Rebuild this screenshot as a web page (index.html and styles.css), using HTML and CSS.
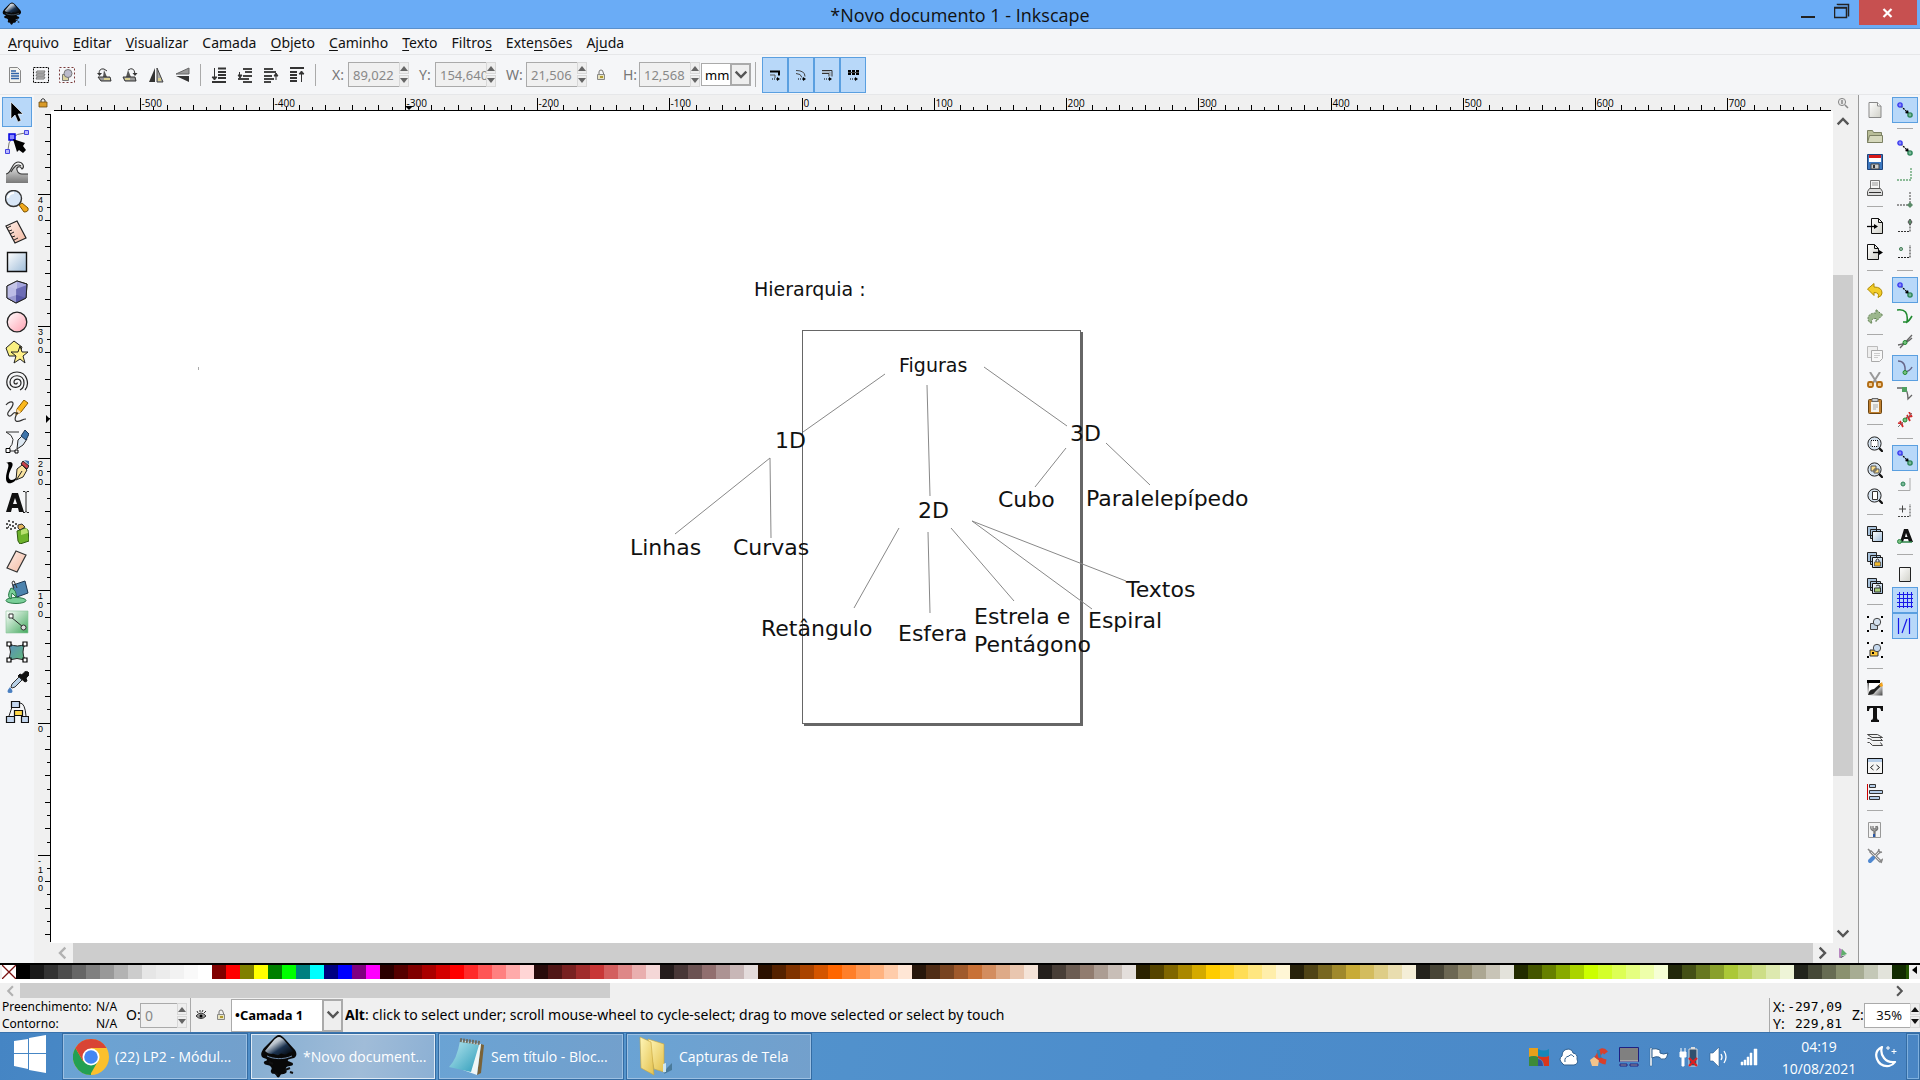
FILE: index.html
```html
<!DOCTYPE html>
<html lang="pt-BR">
<head>
<meta charset="utf-8">
<title>*Novo documento 1 - Inkscape</title>
<link rel="stylesheet" href="styles.css">
</head>
<body>
<svg class="defs" width="0" height="0" aria-hidden="true">
  <defs>
    <linearGradient id="gBlue" x1="0" y1="0" x2="1" y2="1"><stop offset="0" stop-color="#fff"/><stop offset="1" stop-color="#9dbbd8"/></linearGradient>
    <linearGradient id="gPink" x1="0" y1="0" x2="1" y2="1"><stop offset="0" stop-color="#fff"/><stop offset="1" stop-color="#ffa0b0"/></linearGradient>
    <linearGradient id="gPeach" x1="0" y1="0" x2="1" y2="1"><stop offset="0" stop-color="#fff0ea"/><stop offset="1" stop-color="#f2b8a0"/></linearGradient>
    <linearGradient id="gGreen" x1="0" y1="0" x2="1" y2="1"><stop offset="0" stop-color="#fff"/><stop offset="1" stop-color="#41a85c"/></linearGradient>
    <linearGradient id="gMesh" x1="0" y1="0" x2="1" y2="1"><stop offset="0" stop-color="#5a8fbd"/><stop offset="1" stop-color="#5fb878"/></linearGradient>
    <linearGradient id="gGrey" x1="0" y1="0" x2="0" y2="1"><stop offset="0" stop-color="#fff"/><stop offset="1" stop-color="#777"/></linearGradient>
    <linearGradient id="gPaper" x1="0" y1="0" x2="1" y2="1"><stop offset="0" stop-color="#fff"/><stop offset="1" stop-color="#d0d0c8"/></linearGradient>
    <linearGradient id="gInk" x1="0" y1="0" x2="1" y2="1"><stop offset="0" stop-color="#fff"/><stop offset=".35" stop-color="#b9c2cc"/><stop offset=".6" stop-color="#1c3350"/><stop offset="1" stop-color="#000"/></linearGradient>
    <linearGradient id="gPad" x1="0" y1="0" x2="1" y2="1"><stop offset="0" stop-color="#b8e8f0"/><stop offset="1" stop-color="#2f9cba"/></linearGradient>
    <linearGradient id="gFold" x1="0" y1="0" x2="1" y2="1"><stop offset="0" stop-color="#fff6b8"/><stop offset="1" stop-color="#e3c14e"/></linearGradient>
    <linearGradient id="gBrush" x1="0" y1="0" x2="1" y2="1"><stop offset="0" stop-color="#222"/><stop offset=".5" stop-color="#fff"/><stop offset="1" stop-color="#444"/></linearGradient>
    <symbol id="inkscape" viewBox="0 0 36 46">
      <path d="M18 1c2 0 4 2 6 4l10 11c2 3 2 6-1 8-3 1-7 1-6 3 1 1 5 1 5 3 0 3-6 1-7 4-1 2 2 3 0 5-3 2-5 0-6 3-1 2-3 2-4-1-1-2-4 0-5-3-1-2 2-3 0-5-2-3-6-1-7-4-1-2 3-2 3-3 0-2-3-1-5-3-2-3 0-6 2-9L12 5c2-2 4-4 6-4z" fill="#080808"/>
      <path d="M18 3c2 0 4 2 5 3l9 11c-1 3-3 0-6 3-3 2-5-2-7 0-3 3-5-1-8 0-3 0-5-1-7-3L13 6c1-1 3-3 5-3z" fill="url(#gInk)"/>
      <path d="M8 28l4 2M24 36l5-2M14 39l3 2M29 38l3 1" stroke="#111" stroke-width="2"/>
      <path d="M6 22c6 3 16 4 25 0" stroke="#6d89a8" stroke-width="1" fill="none"/>
    </symbol>
    <symbol id="nodes" viewBox="0 0 16 16">
      <path d="M4 4l7 7" stroke="#000" stroke-width="1.3" stroke-dasharray="2 1"/><path d="M12 12l-4-1 3-3z"/>
      <circle cx="3" cy="3" r="2.1" fill="#8a8af8" stroke="#3a3af0" stroke-width="1.4"/><circle cx="13" cy="13" r="2.1" fill="#7ab898" stroke="#2c8558" stroke-width="1.4"/>
    </symbol>
    <symbol id="lens" viewBox="0 0 16 16">
      <path d="M12 12l3 3" stroke="#111" stroke-width="2.4" stroke-linecap="round"/><circle cx="7.500" cy="7.500" r="6.600" fill="#d5e2ef" stroke="#222"/>
    </symbol>
    <symbol id="stack" viewBox="0 0 16 16"><path d="M.5.500h9v9h-9zM3.500 3.500h10v9h-10z" fill="#a9c3dc" stroke="#222"/><path d="M5.500 5.500h10v10h-10z" fill="url(#gBlue)" stroke="#111"/></symbol>
    <symbol id="handles" viewBox="0 0 16 16"><path d="M0 0h2v2H0zM14 0h2v2h-2zM0 14h2v2H0zM14 14h2v2h-2z"/></symbol>
    <symbol id="openlock" viewBox="0 0 12 12"><path d="M4 6V3q0-2 2-2t2 2l1 3" fill="none" stroke="#777"/><path d="M2.500 5.500h7v5h-7z" fill="#e8e4c0" stroke="#888"/><path d="M5 7h3v2H5z" fill="#b09a30"/></symbol>
    <symbol id="up" viewBox="0 0 10 12"><path d="M1 9h8L5 4z"/></symbol>
    <symbol id="down" viewBox="0 0 10 12"><path d="M1 3h8L5 8z"/></symbol>
    <symbol id="chev" viewBox="0 0 12 12"><path d="M2 3.500l4 4 4-4" fill="none" stroke="#555" stroke-width="1.800"/></symbol>
  </defs>
</svg>

<header class="titlebar">
  <svg class="app-icon" width="24" height="24"><use href="#inkscape"/></svg>
  <h1>*Novo documento 1 - Inkscape</h1>
  <div class="win-buttons">
    <button class="win" aria-label="Minimizar"><svg width="16" height="20"><path d="M1 16h14v2H1z" fill="#222"/></svg></button>
    <button class="win" aria-label="Restaurar"><svg width="16" height="20"><path d="M3.500 5V4.500h11v12" fill="none" stroke="#222" stroke-width="1.500"/><path d="M.5 7.500h12v10H.5zM0 8h13" fill="none" stroke="#222" stroke-width="1.500"/></svg></button>
    <button class="win close" aria-label="Fechar"><svg width="12" height="12"><path d="M1.500 2l8 8m0-8l-8 8" stroke="#fff" stroke-width="2.200"/></svg></button>
  </div>
</header>

<nav class="menubar">
  <a href="#"><u>A</u>rquivo</a><a href="#"><u>E</u>ditar</a><a href="#"><u>V</u>isualizar</a><a href="#">Ca<u>m</u>ada</a><a href="#"><u>O</u>bjeto</a><a href="#"><u>C</u>aminho</a><a href="#"><u>T</u>exto</a><a href="#">Filtro<u>s</u></a><a href="#">Exte<u>n</u>sões</a><a href="#">Aj<u>u</u>da</a>
</nav>

<div class="toolbar">
  <div class="group">
    <button aria-label="Selecionar tudo"><svg viewBox="0 0 16 16"><path d="M2.500.500h8l3 3v12h-11z" fill="#f4f4f0" stroke="#888"/><path d="M4 4h5M4 6.500h8M4 9h8M4 11.500h8" stroke="#2f64a8" stroke-width="1.500"/></svg></button>
    <button aria-label="Selecionar em todas as camadas"><svg viewBox="0 0 16 16"><path d="M.5.500h15v15H.5z" fill="none" stroke="#000" stroke-dasharray="2 1"/><path d="M4 4h8l-1 2h-8zM4 7h8l-1 2h-8zM4 10h8l-1 2h-8z" fill="#ccc" stroke="#777"/></svg></button>
    <button aria-label="Desfazer seleção"><svg viewBox="0 0 16 16"><path d="M.5.500h15v15H.5z" fill="none" stroke="#7a3a3a" stroke-dasharray="2 2"/><path d="M3.500 7.500h6v6h-6z" fill="#ddd5a0" stroke="#777"/><circle cx="9" cy="6.500" r="4" fill="#bbc" stroke="#777"/></svg></button>
  </div>
  <div class="group">
    <button aria-label="Girar 90° anti-horário"><svg viewBox="0 0 16 16"><path d="M3 7q0-6 5-5l3 2" fill="none" stroke="#333"/><path d="M1 6h5L3.500 9z" fill="#333"/><path d="M8 3l3 7H7z" fill="#555"/><path d="M2 10h12l1 4H5z" fill="#999" stroke="#333"/><path d="M8 11h6v2H8z" fill="#d8cf90"/></svg></button>
    <button aria-label="Girar 90° horário"><svg viewBox="0 0 16 16"><path d="M6 3q6-4 7 4" fill="none" stroke="#333"/><path d="M10.500 6h5L13 9z" fill="#333"/><path d="M6 3l3 7H4z" fill="#555"/><path d="M1 10h12l1 4H3z" fill="#999" stroke="#333"/><path d="M3 11h5v2H3z" fill="#d8cf90"/></svg></button>
    <button aria-label="Espelhar horizontalmente"><svg viewBox="0 0 16 16"><path d="M7 1v14H1z" fill="#333"/><path d="M9 1v14h6z" fill="#aaa" stroke="#444"/><path d="M10 11h3v3h-3z" fill="#d8cf90"/></svg></button>
    <button aria-label="Espelhar verticalmente"><svg viewBox="0 0 16 16"><path d="M2 7h13V1z" fill="#999" stroke="#666"/><path d="M2 9h13v6z" fill="#333"/></svg></button>
  </div>
  <div class="group">
    <button aria-label="Baixar para o fundo"><svg viewBox="0 0 16 16"><path d="M3.500 1v11M1 10h5l-2.500 3z" fill="#333" stroke="#333"/><path d="M7 1.500h8M7 5h8M7 8h8M7 11h8M1 15h14" stroke="#333" stroke-width="1.800"/></svg></button>
    <button aria-label="Abaixar"><svg viewBox="0 0 16 16"><path d="M2.500 5v4M1 8h4l-2 3z" fill="#333" stroke="#333"/><path d="M6 2h9M8 5h7M1 12h11M6 9h9M6 15h9" stroke="#444" stroke-width="1.800"/></svg></button>
    <button aria-label="Levantar"><svg viewBox="0 0 16 16"><path d="M13 13V8M11 9h4l-2-3z" fill="#333" stroke="#333"/><path d="M1 2h9M1 5h12M1 9h8M1 12h10M1 15h7" stroke="#444" stroke-width="1.800"/></svg></button>
    <button aria-label="Levantar ao topo"><svg viewBox="0 0 16 16"><path d="M12.500 15V5M10 7h5l-2.500-3z" fill="#333" stroke="#333"/><path d="M1 1h14M1 5h7M1 8h7M1 11h7M1 14h7" stroke="#333" stroke-width="1.800"/></svg></button>
  </div>
  <div class="fields">
    <label for="fx">X:</label><span class="spin"><input id="fx" type="text" value="89,022" disabled><span class="steps"><button aria-label="X mais" disabled><svg><use href="#up"/></svg></button><button aria-label="X menos" disabled><svg><use href="#down"/></svg></button></span></span>
    <label for="fy">Y:</label><span class="spin"><input id="fy" type="text" value="154,640" disabled><span class="steps"><button aria-label="Y mais" disabled><svg><use href="#up"/></svg></button><button aria-label="Y menos" disabled><svg><use href="#down"/></svg></button></span></span>
    <label for="fw">W:</label><span class="spin"><input id="fw" type="text" value="21,506" disabled><span class="steps"><button aria-label="W mais" disabled><svg><use href="#up"/></svg></button><button aria-label="W menos" disabled><svg><use href="#down"/></svg></button></span></span>
    <button class="lock" aria-label="Travar proporção"><svg width="12" height="12"><use href="#openlock"/></svg></button>
    <label for="fh">H:</label><span class="spin"><input id="fh" type="text" value="12,568" disabled><span class="steps"><button aria-label="H mais" disabled><svg><use href="#up"/></svg></button><button aria-label="H menos" disabled><svg><use href="#down"/></svg></button></span></span>
    <span class="combo unit"><select aria-label="Unidade"><option>mm</option></select><span class="arrow"><svg width="16" height="16"><use href="#chev"/></svg></span></span>
  </div>
  <div class="toggles">
    <button aria-pressed="true" aria-label="Escalar traço"><svg viewBox="0 0 12 12"><path d="M1 2.500h9v4" fill="none" stroke="#000" stroke-width="2"/><path d="M1 6h5v3" fill="none" stroke="#555"/><path d="M3 10h6" stroke="#000" stroke-dasharray="1 1"/><path d="M8 8l3 2-3 2z"/></svg></button>
    <button aria-pressed="true" aria-label="Escalar cantos"><svg viewBox="0 0 12 12"><path d="M1 1.500q9 0 9 6M1 4.500q5 0 6 4" fill="none" stroke="#444"/><path d="M3 10h6" stroke="#000" stroke-dasharray="1 1"/><path d="M8 8l3 2-3 2z"/></svg></button>
    <button aria-pressed="true" aria-label="Mover gradientes"><svg viewBox="0 0 12 12"><path d="M1 1.500h10v6M1 4.500h7v3" fill="none" stroke="#333"/><path d="M1 3h8v4" fill="none" stroke="#999"/><path d="M3 10h6" stroke="#000" stroke-dasharray="1 1"/><path d="M8 8l3 2-3 2z"/></svg></button>
    <button aria-pressed="true" aria-label="Mover padrões"><svg viewBox="0 0 12 12"><path d="M1 2h11M1 5h11" stroke="#000" stroke-width="2" stroke-dasharray="3 1"/><path d="M1 3.500h11" stroke="#444"/><path d="M3 10h6" stroke="#000" stroke-dasharray="1 1"/><path d="M8 8l3 2-3 2z"/></svg></button>
  </div>
</div>

<main class="workspace">
  <div class="toolbox">
    <button aria-pressed="true" aria-label="Selecionar"><svg viewBox="0 0 24 24"><path d="M6 2v17l4-4 3 7 3-1.500-3-6.500h5z" fill="#000" stroke="#fff" stroke-width=".6"/></svg></button>
    <button aria-label="Nós"><svg viewBox="0 0 24 24"><path d="M3 20Q3 4 20 3" fill="none" stroke="#777"/><path d="M.5 19.500h4v4h-4zM19.500.500h4v4h-4z" fill="#b8b8ff" stroke="#4444e0"/><path d="M4 4h6v6H4z" fill="#8a8aff" stroke="#0000e0" stroke-width="1.500"/><path d="M8 9l12 4-2 3 3 4-3 3-4-3-2 2z" fill="#000"/></svg></button>
    <button aria-label="Ajustar"><svg viewBox="0 0 24 24"><path d="M1 14c6 0 5-12 12-12 5 0 7 5 4 7-2-4-6-2-5 1 1 5 6 4 11 4v9H1z" fill="url(#gGrey)"/><path d="M1 14c6 0 5-12 12-12 5 0 7 5 4 7-2-4-6-2-5 1 1 5 6 4 11 4M6 12c3-5 6-9 10-6" fill="none" stroke="#333" stroke-width="1.100"/></svg></button>
    <button aria-label="Zoom"><svg viewBox="0 0 24 24"><path d="M14 15l3-2 6 5q1 4-4 4z" fill="#f0a81c" stroke="#7a5200"/><circle cx="8.500" cy="8.500" r="8" fill="#d8e6f6" stroke="#333" stroke-width="1.400"/><path d="M3 8q1-5 6-5" stroke="#fff" stroke-width="2" fill="none"/></svg></button>
    <button aria-label="Medir"><svg viewBox="0 0 24 24"><path d="M1 6l11-5 9 17-11 5z" fill="url(#gPeach)" stroke="#222" stroke-width="1.200"/><path d="M2 8l4-2M4 11l3-1M5 14l4-2M7 17l3-1M9 20l4-2" stroke="#222"/></svg></button>
    <button aria-label="Retângulo"><svg viewBox="0 0 24 24"><path d="M2.500 2.500h19v19h-19z" fill="url(#gBlue)" stroke="#111" stroke-width="1.400"/></svg></button>
    <button aria-label="Caixa 3D"><svg viewBox="0 0 24 24"><path d="M2 6l10-5 10 3-1 14-10 5-9-5z" fill="#8e8ed0" stroke="#222"/><path d="M2 6l10-5v14L2 18z" fill="#c5c5e8"/><path d="M12 1l9.500 3.500L21 18l-9-3z" fill="#a5a5dc"/><path d="M2 18l10-3 9 3-10 4.500z" fill="#52529f"/><path d="M2 6l9 3v14l-9-5z" fill="#b9b9e6" fill-opacity=".7"/><path d="M11 9l11-4-1 13-10 5z" fill="#5a5aa8" fill-opacity=".75"/><path d="M2 6l10-5 10 3-1 14-10 5-9-5z" fill="none" stroke="#222"/></svg></button>
    <button aria-label="Elipse"><svg viewBox="0 0 24 24"><circle cx="12" cy="12" r="9.800" fill="url(#gPink)" stroke="#222" stroke-width="1.300"/></svg></button>
    <button aria-label="Estrela"><svg viewBox="0 0 24 24"><path d="M9 1l8 6-3 9H4L1 8z" fill="#f8ef80" stroke="#222"/><path d="M15 6l2 6 6 0-5 4 2 7-5-4-6 4 2-7-5-4h7z" fill="#fff08a" stroke="#222"/></svg></button>
    <button aria-label="Espiral"><svg viewBox="0 0 24 24"><path d="M12 12.500C13 14 9 15 9 12c0-4 7-4 7 1 0 6-11 6-11-1C5 4 19 3 19 13c0 4-2 6-4 7M6 20C-1 15 1 2 12 2c10 0 13 12 8 18" fill="none" stroke="#222" stroke-width="1.200"/></svg></button>
    <button aria-label="Lápis"><svg viewBox="0 0 24 24"><path d="M1 5c2-3 6-4 7-2 1 5-9 10-4 13 3 1 4-5 7-3 2 1-3 6 0 8 3 2 6-2 10-2" fill="none" stroke="#333" stroke-width="1.200"/><path d="M11 15l1-6 7-9 4 3-7 9z" fill="#fbb81c" stroke="#8a5a00"/><path d="M11 15l1-6 4 3z" fill="#f8dcb0"/><path d="M11 15l.5-3 2 1z"/></svg></button>
    <button aria-label="Caneta"><svg viewBox="0 0 24 24"><path d="M3 20Q14 8 1 2h13M3 21h9" fill="none" stroke="#333"/><path d="M12 19l1-9 5-5 4 4-4 6z" fill="#dde8f2" stroke="#222"/><path d="M16 6l4-6 4 4-3 6z" fill="#3d74ab" stroke="#1c3550"/><path d="M1 18.500h4v4H1zM10 20h3v3h-3z" fill="#fff" stroke="#000"/></svg></button>
    <button aria-label="Caligrafia"><svg viewBox="0 0 24 24"><path d="M1 3C8 0 9 4 6 9c-3 6-3 10 0 11 3 0 5-2 7-4-2 6-7 8-10 7-4-3-1-11 0-15C4 4 3 3 1 3z"/><path d="M11 20l1-11 5-4 5 5-4 7z" fill="#f8e2a0" stroke="#222"/><path d="M16 4l2-3 6 5-2 3z" fill="#c7404a" stroke="#222"/><path d="M19 0l5 1v4z" fill="#3d74ab"/><path d="M12 19l5-8" stroke="#222"/></svg></button>
    <button aria-label="Texto"><svg viewBox="0 0 24 24"><path d="M7 3h6l6 19h-5l-1-4H7l-1 4H1zM8 14h4l-2-6z" fill="#111" fill-rule="evenodd"/><path d="M18 1.500h2l1 1 1-1h2M21 2v20M18 22.500h2l1-1 1 1h2" fill="none" stroke="#222"/></svg></button>
    <button aria-label="Spray"><svg viewBox="0 0 24 24"><path d="M12 11l8-3 3 2 1 11-9 3-2-3z" fill="#6db32c" stroke="#2f5c10"/><path d="M16 10l6-2 1 5-7 2z" fill="#b8e070"/><path d="M13 5l4-1 3 3-5 3-2-2z" fill="#e2b35c" stroke="#333"/><path d="M10 4h2M7 2h2M3 1h2M7 6h2M4 5h2M1 4h2M9 8h2M5 9h2M1 8h2M3 7h1" stroke="#222" stroke-width="1.600"/></svg></button>
    <button aria-label="Borracha"><svg viewBox="0 0 24 24"><path d="M11 1l10 4-9 17-10-4z" fill="url(#gPeach)" stroke="#333" stroke-width="1.200"/></svg></button>
    <button aria-label="Balde de tinta"><svg viewBox="0 0 24 24"><ellipse cx="11" cy="20.500" rx="10" ry="3" fill="#79cf98" stroke="#2b7a48"/><path d="M8 5l12-4 3 12-11 4q-5-5-4-12z" fill="#4c83ae" stroke="#1c3550"/><path d="M6 8q-5 9 0 11l1-6 4 4q1-7-5-9z" fill="#79cf98" stroke="#2b7a48"/><path d="M9 8L7 3q0-2 2-2l3 7" fill="none" stroke="#333"/></svg></button>
    <button aria-label="Gradiente"><svg viewBox="0 0 24 24"><path d="M1 1h22v22H1z" fill="url(#gGreen)" stroke="#8cc79a" stroke-width=".6"/><path d="M6 7l12 10" stroke="#222"/><path d="M4 4h4v4H4z" fill="#fff" stroke="#333"/><circle cx="18.500" cy="17.500" r="2.500" fill="#ddd" stroke="#333"/></svg></button>
    <button aria-label="Malha"><svg viewBox="0 0 24 24"><path d="M4 4q9 4 16 0-4 8 0 16-8-3-16 0 3-8 0-16z" fill="url(#gMesh)" stroke="#222"/><path d="M2 2h4v4H2zM18 2h4v4h-4zM2 18h4v4H2zM18 18h4v4h-4z" fill="#fff" stroke="#000" stroke-width="1.200"/></svg></button>
    <button aria-label="Conta-gotas"><svg viewBox="0 0 24 24"><path d="M13 6l2-2 2 1q3-5 6-3t-2 6l1 3-2 1z" fill="#111" stroke="#111"/><path d="M6 17l1-3 7-7 3 3-7 7-3 1z" fill="#b8d0e6" stroke="#333"/><path d="M5 17q-5 6 0 6t0-6z" fill="#4a7fc0"/></svg></button>
    <button aria-label="Conector"><svg viewBox="0 0 24 24"><path d="M7 7L4 16M15 3q5 0 6 13" fill="none" stroke="#222"/><path d="M6.500 1.500h8v6h-8zM1.500 16.500h8v6h-8zM16.500 16.500h7v6h-7z" fill="#c3d6ee" stroke="#111" stroke-width="1.200"/><path d="M9.500 10.500h8v5h-8z" fill="#ffd84a" stroke="#111" stroke-width="1.200"/></svg></button>
  </div>

  <section class="editor">
    <div class="corner"><svg width="10" height="12"><path d="M3 5V3q2-3 4 0v2" fill="none" stroke="#333"/><path d="M1 5h8v5H1z" fill="#d99a28" stroke="#6b4a10" stroke-width=".8"/></svg></div>
    <svg class="ruler" id="rulerX" aria-hidden="true"></svg>
    <div class="corner"><svg width="12" height="12"><circle cx="5" cy="5" r="3.600" fill="#e8e8e8" stroke="#888"/><path d="M8 8l3 3M5 3v4" stroke="#888" stroke-width="1.500"/></svg></div>
    <svg class="ruler vertical" id="rulerY" aria-hidden="true"></svg>
    <svg class="canvas" role="img" aria-label="Hierarquia de figuras">
      <g transform="translate(-51 -111)">
        <path d="M804 724h277V332h2v394H804z" fill="#666"/>
        <rect x="802.500" y="330.500" width="278" height="393" fill="#fff" stroke="#666"/>
        <path d="M198.500 367v3" stroke="#aaa"/>
        <g class="links">
          <path d="M885 374L803 432M927 385l3 111M984 367l83 59M770 458l-95 76M770 458l1 80M1066 448l-31 39M1106 443l44 42M899 528l-45 80M928 532l2 81M951 528l63 73M972 521l120 88M972 521l154 60"/>
        </g>
        <g class="small">
          <text x="754" y="296">Hierarquia :</text>
          <text x="899" y="372">Figuras</text>
        </g>
        <g class="big">
          <text x="775" y="448">1D</text><text x="918" y="518">2D</text><text x="1070" y="441">3D</text>
          <text x="630" y="555">Linhas</text><text x="733" y="555">Curvas</text>
          <text x="998" y="507">Cubo</text><text x="1086" y="506">Paralelepípedo</text>
          <text x="761" y="636">Retângulo</text><text x="898" y="641">Esfera</text>
          <text x="974" y="624">Estrela e</text><text x="974" y="652">Pentágono</text>
          <text x="1126" y="597">Textos</text><text x="1088" y="628">Espiral</text>
        </g>
      </g>
    </svg>
    <div class="scroll-y"><button aria-label="Rolar para cima"><svg class="flip" width="16" height="16"><use href="#chev"/></svg></button><div class="track"><div class="thumb"></div></div><button aria-label="Rolar para baixo"><svg width="16" height="16"><use href="#chev"/></svg></button></div>
    <div class="scroll-x"><button class="dim" aria-label="Rolar para a esquerda"><svg class="left" width="16" height="16"><use href="#chev"/></svg></button><div class="thumb"></div><button aria-label="Rolar para a direita"><svg class="right" width="16" height="16"><use href="#chev"/></svg></button></div>
    <div class="corner"><svg width="12" height="12"><path d="M2 1l4 2-2 7-2 1z" fill="#b888c0"/><path d="M5 2l5 5-6 2z" fill="#5fae6c"/><path d="M3 10l6-2-5 3z" fill="#445"/></svg></div>
  </section>

  <aside class="panels">
    <div class="commands">
      <button aria-label="Novo"><svg viewBox="0 0 16 16"><path d="M2 .500h8.500l3.500 3.500v11.500H2z" fill="url(#gPaper)" stroke="#888"/><path d="M10.500.500v3.500H14" fill="#fff" stroke="#888"/></svg></button>
      <button aria-label="Abrir"><svg viewBox="0 0 16 16"><path d="M.5 14.500v-12h5l1 2h8v10z" fill="#b8bd98" stroke="#7b8063"/><path d="M.5 14.500l2-7h13v7z" fill="#d5d8bc" stroke="#7b8063"/></svg></button>
      <button aria-label="Salvar"><svg viewBox="0 0 16 16"><path d="M.5.500h15v15H.5z" fill="#3c78c0" stroke="#1d437a"/><path d="M2 1h12v7H2z" fill="#fff"/><path d="M2 1h12v3H2z" fill="#d81a1a"/><path d="M4 10h8v5H4z" fill="#ccc" stroke="#444"/><path d="M6 11h2v3H6z" fill="#333"/></svg></button>
      <button aria-label="Imprimir"><svg viewBox="0 0 16 16"><path d="M3.500 9V.500h9V9" fill="#f4f4f4" stroke="#777"/><path d="M5 3h6M5 5h6" stroke="#999"/><path d="M2.500 8.500h11l2 3v4H.5v-4z" fill="#ddd" stroke="#555"/><path d="M2 12.500h12" stroke="#333"/></svg></button>
      <hr>
      <button aria-label="Importar"><svg viewBox="0 0 16 16"><path d="M4.500.500h7l4 4v11h-11z" fill="url(#gPaper)" stroke="#111"/><path d="M11.500.500v4h4" fill="none" stroke="#111"/><path d="M0 8.500h8" stroke="#000" stroke-width="1.300"/><path d="M7 6l4 2.500L7 11z"/></svg></button>
      <button aria-label="Exportar"><svg viewBox="0 0 16 16"><path d="M.5.500h7l4 4v11H.5z" fill="url(#gPaper)" stroke="#111"/><path d="M7.500.500v4h4" fill="none" stroke="#111"/><path d="M6 8.500h7" stroke="#000" stroke-width="1.300"/><path d="M12 6l4 2.500-4 2.500z"/></svg></button>
      <hr>
      <button aria-label="Desfazer"><svg viewBox="0 0 16 16"><path d="M.5 7L7 1.500V5q8 0 8 6 0 3-4 4.500 2-5-4-5v3z" fill="#f2cd2a" stroke="#b08a00"/></svg></button>
      <button aria-label="Refazer"><svg viewBox="0 0 16 16"><path d="M15.500 7L9 1.500V5q-8 0-8 6 0 3 4 4.500-2-5 4-5v3z" fill="#9bb78c" stroke="#5f7f50" stroke-dasharray="2 1"/></svg></button>
      <hr>
      <button aria-label="Copiar"><svg viewBox="0 0 16 16"><path d="M.5.500h10v11H.5z" fill="#eee" stroke="#bbb"/><path d="M4.500 4.500h11v8l-3 3h-8z" fill="#f8f8f8" stroke="#aaa"/><path d="M7 7.500h6M7 9.500h6M7 11.500h4" stroke="#ccc"/></svg></button>
      <button aria-label="Recortar"><svg viewBox="0 0 16 16"><path d="M3 0l7 11M13 0L6 11" stroke="#999" stroke-width="2"/><rect x="1" y="10" width="5" height="5" rx="1.500" fill="#f0c890" stroke="#b06a10" stroke-width="1.800"/><rect x="10" y="10" width="5" height="5" rx="1.500" fill="#f0c890" stroke="#b06a10" stroke-width="1.800"/></svg></button>
      <button aria-label="Colar"><svg viewBox="0 0 16 16"><rect x="1.500" y="1.500" width="13" height="14" rx="1" fill="#c08030" stroke="#6b4410"/><path d="M4 4h8v10H4z" fill="#f4f4f0"/><path d="M5 .500h6v3H5z" fill="#ccc" stroke="#666"/><path d="M6 7h5M6 9h5M6 11h3" stroke="#aaa"/></svg></button>
      <hr>
      <button aria-label="Zoom na seleção"><svg viewBox="0 0 16 16"><use href="#lens"/><path d="M4 4.500h7v6H4z" fill="#fff" stroke="#000" stroke-dasharray="1 1"/></svg></button>
      <button aria-label="Zoom no desenho"><svg viewBox="0 0 16 16"><use href="#lens"/><path d="M4 4h5v5H4zM7 7h5v4H7z" fill="#ffe08a" stroke="#555"/></svg></button>
      <button aria-label="Zoom na página"><svg viewBox="0 0 16 16"><use href="#lens"/><path d="M5.500 3.500h5v8h-5z" fill="#fff" stroke="#333"/></svg></button>
      <hr>
      <button aria-label="Duplicar"><svg viewBox="0 0 16 16"><use href="#stack"/></svg></button>
      <button aria-label="Clonar"><svg viewBox="0 0 16 16"><use href="#stack"/><path d="M9 10V8q1.500-2 3 0v2" fill="none" stroke="#333"/><path d="M7.500 10h6v4h-6z" fill="#f2b92c" stroke="#444" stroke-width=".7"/></svg></button>
      <button aria-label="Desligar clone"><svg viewBox="0 0 16 16"><use href="#stack"/><path d="M9 8q2-2 4 0v2" fill="none" stroke="#333"/><path d="M7.500 10h6v4h-6z" fill="#a9d07a" stroke="#222" stroke-width=".9"/></svg></button>
      <hr>
      <button aria-label="Agrupar"><svg viewBox="0 0 16 16"><use href="#handles"/><path d="M3.500 7.500h7v6h-7z" fill="#c3d3e2" stroke="#444"/><circle cx="10" cy="6" r="3.700" fill="#d5e2ef" stroke="#444"/></svg></button>
      <button aria-label="Desagrupar"><svg viewBox="0 0 16 16"><use href="#handles"/><path d="M3 8h8v6H3z" fill="#ffc93a" stroke="#333"/><circle cx="10" cy="6" r="3.700" fill="#c5d8ee" stroke="#444"/><path d="M5 10h2v2H5z"/></svg></button>
      <hr>
      <button aria-label="Preenchimento e contorno"><svg viewBox="0 0 16 16"><path d="M.5.500h15v15H.5z" fill="url(#gBrush)"/><path d="M2 3h11L2 13z" fill="#fff"/><path d="M0 1.500h13" stroke="#000" stroke-width="3"/><path d="M1 15q1-6 6-6l7-6v3l-6 6q-1 3-7 3z" fill="#222"/><path d="M12 5l3-3 1 4-2 1z" fill="#f5a51c"/></svg></button>
      <button aria-label="Texto e fonte"><svg viewBox="0 0 16 16"><path d="M0 0h16v5h-2q0-3-2-3h-2v10q0 2 2 2v2H4v-2q2 0 2-2V2H4Q2 2 2 5H0z" fill="#111"/></svg></button>
      <button aria-label="Camadas"><svg viewBox="0 0 16 16"><path d="M.5 2.500h10l5 3H5zM.5 6.500h2l3 2h10l-2-2M.5 10.500h2l3 3h10l-2-3" fill="#eee" stroke="#444"/></svg></button>
      <button aria-label="Editor XML"><svg viewBox="0 0 16 16"><path d="M.5.500h15v15H.5z" fill="#f4f4f4" stroke="#111"/><path d="M1 1h14v3H1z" fill="#b5cde8"/><path d="M6.500 7l-3 2.500 3 2.500M9.500 7l3 2.500-3 2.500" fill="none" stroke="#222"/></svg></button>
      <button aria-label="Alinhar e distribuir"><svg viewBox="0 0 16 16"><path d="M.5 0v16" stroke="#c00"/><path d="M2.500.500h6v3h-6zM2.500 6.500h13v3h-13zM2.500 12.500h10v3h-10z" fill="#b5cde8" stroke="#333"/></svg></button>
      <hr>
      <button aria-label="Preferências do documento"><svg viewBox="0 0 16 16"><path d="M1.500.500h12v15h-12z" fill="#f4f4f4" stroke="#999"/><path d="M4 4q-1 4 3 5v6M10 4q2 4-2 5v6M6 4v3h3V4" fill="none" stroke="#777" stroke-width="1.300"/><path d="M6 12h2v3H6z" fill="#2c5aa8"/></svg></button>
      <button aria-label="Preferências"><svg viewBox="0 0 16 16"><path d="M3 3l10 10M13 3L3 13" stroke="#888" stroke-width="3"/><path d="M3 3l10 10" stroke="#ddd"/><path d="M1 1l3 3M12 1l-1 4 4-1M14 15l1-3-3 2" fill="none" stroke="#888" stroke-width="1.600"/><path d="M3 13l3-3" stroke="#4f88d0" stroke-width="4" stroke-linecap="round"/><path d="M12 4l-4 4" stroke="#ddd"/></svg></button>
    </div>
    <div class="snaps">
      <button aria-pressed="true" aria-label="Ativar encaixe"><svg><use href="#nodes"/></svg></button>
      <hr>
      <button aria-label="Encaixar caixas"><svg><use href="#nodes"/></svg></button>
      <button aria-label="Encaixar bordas"><svg viewBox="0 0 16 16"><path d="M0 14h14V1" fill="none" stroke="#6aa878" stroke-width="1.400" stroke-dasharray="2 1"/></svg></button>
      <button aria-label="Encaixar cantos"><svg viewBox="0 0 16 16"><path d="M0 13h13V0" fill="none" stroke="#777" stroke-width="1.400" stroke-dasharray="2 1"/><path d="M13 10l3 3-3 3-3-3z" fill="#5a8a68"/></svg></button>
      <button aria-label="Encaixar meios de borda"><svg viewBox="0 0 16 16"><path d="M1 13.500h12V5" fill="none" stroke="#333" stroke-dasharray="2 1"/><path d="M13 1l2 3-2 3-2-3z" fill="#5a8a68" stroke="#555"/></svg></button>
      <button aria-label="Encaixar centros"><svg viewBox="0 0 16 16"><path d="M1 13.500h12V1" fill="none" stroke="#222" stroke-dasharray="2 1"/><circle cx="4" cy="5" r="1.600" fill="#9ab8a4" stroke="#4c8560"/></svg></button>
      <hr>
      <button aria-pressed="true" aria-label="Encaixar nós"><svg><use href="#nodes"/></svg></button>
      <button aria-label="Encaixar caminhos"><svg viewBox="0 0 16 16"><path d="M0 2q12-2 10 12 2-1 5-6M10 14l-4 0" fill="none" stroke="#208a30" stroke-width="1.600"/></svg></button>
      <button aria-label="Encaixar interseções"><svg viewBox="0 0 16 16"><path d="M1 11q8-1 14-7M3 14L15 1" fill="none" stroke="#666" stroke-width="1.300"/><circle cx="8" cy="8.500" r="2" fill="#7ac080" stroke="#208a30"/></svg></button>
      <button aria-pressed="true" aria-label="Encaixar nós cúspides"><svg viewBox="0 0 16 16"><path d="M1 1q8 0 7 11 5-1 7-5" fill="none" stroke="#668" stroke-width="1.500"/><circle cx="8" cy="12.500" r="2" fill="#7ac080" stroke="#208a30"/></svg></button>
      <button aria-label="Encaixar nós suaves"><svg viewBox="0 0 16 16"><path d="M0 2h5q4 1 5 4t1 7l4-4" fill="none" stroke="#666" stroke-width="1.300"/><path d="M5 1h5v5H5z" fill="#50a060"/></svg></button>
      <button aria-label="Encaixar meios de linha"><svg viewBox="0 0 16 16"><path d="M3 9l3 6M1 11l5 1M10 3l3 6M9 6l6-2M12 0l3 5" stroke="#d02828" stroke-width="1.700"/><path d="M1 15L15 1" stroke="#777"/><circle cx="8" cy="8" r="2" fill="#7ac080" stroke="#208a30"/></svg></button>
      <hr>
      <button aria-pressed="true" aria-label="Encaixar outros pontos"><svg><use href="#nodes"/></svg></button>
      <button aria-label="Centro de objetos"><svg viewBox="0 0 16 16"><path d="M1 14.500h12V2" fill="none" stroke="#aaa"/><circle cx="6" cy="8" r="2" fill="#7ab898" stroke="#2c8558"/></svg></button>
      <button aria-label="Centro de rotação"><svg viewBox="0 0 16 16"><path d="M1 14.500h12V2" fill="none" stroke="#444" stroke-dasharray="2 1"/><path d="M2 7h7M5.500 3.500v7" stroke="#444"/></svg></button>
      <button aria-label="Linha de base de texto"><svg viewBox="0 0 16 16"><path d="M7 1h4l5 13h-4l-1-3H7l-1 3H3zM8 9h2.500L9 5z" fill="#111" fill-rule="evenodd"/><path d="M1 14h14" stroke="#2c8548" stroke-width="1.500"/><circle cx="2.500" cy="13.500" r="2" fill="#7ac080" stroke="#2c8548"/></svg></button>
      <hr>
      <button aria-label="Borda da página"><svg viewBox="0 0 16 16"><path d="M2.500 1.500h11v14h-11z" fill="url(#gPaper)" stroke="#222"/></svg></button>
      <button aria-pressed="true" aria-label="Grades"><svg viewBox="0 0 16 16"><path d="M2.500 0v16M6.500 0v16M10.500 0v16M14.500 0v16M0 2.500h16M0 6.500h16M0 10.500h16M0 14.500h16" stroke="#1818e8"/></svg></button>
      <button aria-pressed="true" aria-label="Guias"><svg viewBox="0 0 16 16"><path d="M1.500 0v16M12.500 0v16M10 1L5 15" stroke="#1818e8" stroke-width="1.200"/></svg></button>
    </div>
  </aside>
</main>

<div class="palette"><div class="swatches" id="swatches"><button class="none" aria-label="Nenhuma cor"><svg width="14" height="14"><path d="M0 0l14 14M14 0L0 14" stroke="#7a1010" stroke-width="1.300"/></svg></button></div><button class="menu" aria-label="Menu da paleta"><svg width="8" height="10"><path d="M6 1v8L1 5z"/></svg></button></div>
<div class="palette-scroll"><button class="dim" aria-label="Paleta anterior"><svg class="left" width="14" height="14"><use href="#chev"/></svg></button><div class="track"><div class="thumb"></div></div><button aria-label="Próxima paleta"><svg class="right" width="14" height="14"><use href="#chev"/></svg></button></div>

<footer class="status">
  <dl class="paint"><dt>Preenchimento:</dt><dd>N/A</dd><dt>Contorno:</dt><dd>N/A</dd></dl>
  <label for="op">O:</label>
  <span class="spin opacity"><input id="op" type="text" value="0" disabled><span class="steps"><button aria-label="Opacidade mais" disabled><svg><use href="#up"/></svg></button><button aria-label="Opacidade menos" disabled><svg><use href="#down"/></svg></button></span></span>
  <div class="layer">
    <button aria-label="Visibilidade"><svg width="12" height="12"><path d="M1 7q5-6 10 0-5 5-10 0M3 4L2 2M5 3V1M7 3l1-2M9 4l2-2" fill="#999" stroke="#333"/><circle cx="6" cy="7" r="1.500"/></svg></button>
    <button aria-label="Travar camada"><svg width="12" height="12"><use href="#openlock"/></svg></button>
    <span class="combo"><select aria-label="Camada atual"><option>•Camada 1</option></select><span class="arrow"><svg width="16" height="16"><use href="#chev"/></svg></span></span>
  </div>
  <p class="hint"><b>Alt</b>: click to select under; scroll mouse-wheel to cycle-select; drag to move selected or select by touch</p>
  <dl class="coords"><dt>X:</dt><dd>-297,09</dd><dt>Y:</dt><dd>229,81</dd></dl>
  <label for="zm">Z:</label>
  <span class="spin zoom"><input id="zm" type="text" value="35%"><span class="steps"><button aria-label="Aumentar zoom"><svg><use href="#up"/></svg></button><button aria-label="Diminuir zoom"><svg><use href="#down"/></svg></button></span></span>
</footer>

<div class="taskbar">
  <button class="start" aria-label="Iniciar"><svg width="34" height="42"><path d="M1 8l14-2v14H1zM16 5l17-3v18H16zM1 21h14v15L1 33zM16 21h17v19l-17-3z" fill="#fff"/></svg></button>
  <div class="tasks">
    <button><svg width="36" height="46" viewBox="0 0 36 46"><g transform="translate(18 23)"><circle r="18" fill="#fbc02d"/><path d="M-15.600-9L-8 4 0 8l0 10A18 18 0 0 1-15.600-9z" fill="#23a052"/><path d="M0 8L7 4-1 18z" fill="#23a052"/><path d="M0-9h15.600L8 2z" fill="#fbc02d"/><path d="M-15.600-9A18 18 0 0 1 15.600-9H0L-8 4z" fill="#d94434"/><circle r="8.500" fill="#fff"/><circle r="6.800" fill="#4586f3"/></g></svg><span>(22) LP2 - Módul...</span></button>
    <button class="active"><svg width="36" height="46"><use href="#inkscape"/></svg><span>*Novo document...</span></button>
    <button><svg width="36" height="46" viewBox="0 0 36 46"><path d="M32 10l3 1-3 28-4 2z" fill="#7a6238"/><path d="M11 6l21 4-4 31-14-5z" fill="#f0f6f6"/><path d="M11 7l19 4-8 27-22-5q8-8 11-26z" fill="url(#gPad)"/><path d="M11 6l20 3" stroke="#6d6d60" stroke-width="4" stroke-dasharray="2 1"/></svg><span>Sem título - Bloc...</span></button>
    <button><svg width="36" height="46" viewBox="0 0 36 46"><path d="M30 34l5-5v7l-8 4z" fill="#4a7a9a"/><path d="M11 5l16 5v28l-10-3z" fill="url(#gFold)" stroke="#c9a63c" stroke-width=".6"/><path d="M3 3l11 5 3 33L4 34z" fill="url(#gFold)" stroke="#c9a63c" stroke-width=".6"/><path d="M26 30l3-1v9h-3z" fill="#cfe6ee"/></svg><span>Capturas de Tela</span></button>
  </div>
  <div class="tray">
    <svg viewBox="0 0 20 20"><path d="M0 1h9v9q-5-2-9 0z" fill="#e8a01c"/><path d="M0 10q5-2 9 0v9H0z" fill="#3d8a3a"/><path d="M9 2q6 3 11 0v7q-6 2-11 0z" fill="#1588b8"/><path d="M9 9q6 2 11 0v10h-5q0-6-6-8z" fill="#d8371c"/><path d="M9 12q5 1 5 7H9z" fill="#3050a0"/></svg>
    <svg viewBox="0 0 20 20"><path d="M3 16q-4-4 0-7 0-7 7-7 4 1 4 4 5 1 4 6 2 5-3 6H5z" fill="#fff" stroke="#31608f"/><path d="M6 15q-1-5 4-6 2-3 5 1" fill="none" stroke="#31608f"/></svg>
    <svg viewBox="0 0 20 20"><path d="M17 6q-4-5-7 1t7 8" fill="none" stroke="#d8402c" stroke-width="5"/><path d="M9 3l2 8" stroke="#2980b8" stroke-width="3"/><path d="M1 13l4-3 5 3-1 6H3z" fill="#f2c48c"/><path d="M6 9l6 5" stroke="#d8402c" stroke-width="2"/></svg>
    <svg viewBox="0 0 20 20"><path d="M.5.500h19v14H.5z" fill="#808080" stroke="#202080"/><path d="M1 14h18" stroke="#ccc"/><path d="M1 17h7v2H1zM11 17h8v2h-8z" fill="#999" stroke="#202080"/></svg>
    <svg viewBox="0 0 20 20"><path d="M1 1h2v18H1z" fill="#fff" stroke="#31608f" stroke-width=".5"/><path d="M3 2q4-1 8 1v3q3 2 8 0-1 5-3 6-4 1-6-2-3-1-7 1z" fill="#fff" stroke="#31608f"/></svg>
    <svg viewBox="0 0 20 20"><path d="M10 2h8v17h-8z" fill="#30506e" stroke="#ddd"/><path d="M12 0h4v2h-4z" fill="#ddd"/><path d="M1 5h6v5H1zM3 10h2v9H3zM2 1v4M6 1v4" fill="#fff" stroke="#fff"/><path d="M10 11l8 8m0-8l-8 8" stroke="#e02020" stroke-width="2.200"/></svg>
    <svg viewBox="0 0 20 20"><path d="M1 6h3l6-6v20l-6-6H1z" fill="#fff" stroke="#31608f" stroke-width=".6"/><path d="M12 7q2 3 0 6M15 4q4 6 0 12" fill="none" stroke="#fff" stroke-width="1.300"/></svg>
    <svg viewBox="0 0 20 20"><path d="M2 15h2v3H2zM5 13h2v5H5zM8 10h2v8H8zM11 6h2v12h-2zM15 2h3v16h-3z" fill="#fff" stroke="#fff" stroke-width=".5"/></svg>
  </div>
  <div class="clock"><time>04:19</time><time>10/08/2021</time></div>
  <button class="moon" aria-label="Assistente de foco"><svg width="24" height="24"><path d="M8 2q-8 4-5 12t12 7q4-1 6-4-7 1-11-4T8 2z" fill="none" stroke="#fff" stroke-width="2.200" stroke-linejoin="round"/><path d="M14 1v4M12 3h4M20 4v5M17.500 6.500h5" stroke="#fff"/></svg></button>
  <button class="desktop" aria-label="Mostrar área de trabalho"></button>
</div>
<script src="app.js"></script>
</body>
</html>
```
FILE: styles.css
```css
* { box-sizing: border-box; }
body { margin: 0; height: 100vh; display: flex; flex-direction: column; overflow: hidden; background: #f0f0f0; color: #000; font: 14px/20px "Noto Sans", "Open Sans", sans-serif; }
button { margin: 0; padding: 0; border: 0; background: none; color: inherit; font: inherit; display: grid; place-items: center; }
svg { display: block; flex: none; }
.defs { position: absolute; }
input, select { font: inherit; margin: 0; min-width: 0; border-radius: 0; }

.titlebar { flex: none; height: 29px; display: grid; grid-template-columns: 1fr auto 1fr; background: #6aacf6; border-bottom: 1px solid #5a90cc; }
.titlebar .app-icon { margin: 2px 0 0; }
.titlebar h1 { margin: 0; font: 400 18px/30px "Open Sans", sans-serif; color: #111; }
.win-buttons { display: flex; justify-content: flex-end; padding-right: 3px; }
.win { width: 34px; height: 25px; align-items: start; }
.win.close { width: 58px; background: #c75050; align-items: center; }

.menubar { flex: none; height: 26px; display: flex; padding-left: 1px; background: #f5f6f8; border-bottom: 1px solid #e6e7e9; }
.menubar a { padding: 0 7px; color: #111; text-decoration: none; line-height: 27px; }
.menubar u { text-underline-offset: 2px; }

.toolbar { flex: none; height: 40px; display: flex; align-items: center; background: #f5f6f8; border-bottom: 1px solid #e6e7e9; }
.group { display: flex; gap: 10px; height: 22px; padding: 0 10px; border-right: 1px solid #aaa; }
.group:first-child { padding-left: 7px; }
.group button { width: 16px; }
.group svg { width: 16px; height: 16px; }
.fields { display: flex; align-items: center; color: #777; padding: 0 4px 0 16px; border-right: 1px solid #aaa; }
.fields label { width: 16px; }
.fields .spin + label { margin-left: 10px; }
.fields label[for="fw"] { width: 20px; }
.fields .lock { width: 28px; margin-right: 8px; }
.spin { display: flex; }
.spin input { width: 51px; height: 25px; padding: 0 4px; border: 1px solid #aaa; border-right: 0; background: #fff; color: #111; }
.spin input:disabled { background: #f0f0f0; color: #888; }
.fields .spin input { font-size: 13px; padding-right: 0; }
.steps { display: grid; grid-template-rows: 12px 12px; gap: 1px; width: 10px; }
.steps button { width: 10px; height: 12px; background: #eee; outline: 1px solid #d8d8d8; outline-offset: -1px; fill: #111; }
.steps button:disabled { fill: #666; }
.steps svg { width: 10px; height: 12px; }
.combo { display: grid; grid-template-columns: 1fr 21px; }
.combo select { grid-area: 1 / 1 / 2 / 3; appearance: none; background: #fff; border: 1px solid #aaa; padding: 0 3px; color: #000; }
.combo .arrow { grid-area: 1 / 2; display: grid; place-items: center; background: #eee; border: 2px solid #aaa; pointer-events: none; }
.unit { width: 50px; height: 23px; margin-left: 1px; font-size: 13px; }
.toggles { display: flex; margin-left: 6px; }
.toggles button { width: 26px; height: 36px; }
.toggles svg { width: 12px; height: 12px; }
[aria-pressed="true"] { background: #b8d8f9; box-shadow: inset 0 0 0 1px #5a9fe0; }

.workspace { flex: 1; min-height: 0; display: flex; background: #f5f6f8; }
.toolbox { width: 34px; padding: 2px; }
.toolbox button { width: 30px; height: 30px; }
.toolbox svg { width: 24px; height: 24px; }

.editor { flex: 1; min-width: 0; display: grid; grid-template-columns: 17px 1fr 20px; grid-template-rows: 16px 1fr 20px; padding-right: 5px; background: #f0f0f0; border-right: 1px solid #999; }
.corner { display: grid; place-items: center; }
.ruler { width: 100%; height: 100%; min-height: 0; font: 10px "Open Sans", sans-serif; }
.ruler.vertical { font: 9px "Liberation Sans", sans-serif; }
.canvas { width: 100%; height: 100%; background: #fff; }
.links { stroke: #888; stroke-width: 1; fill: none; }
.small, .big { font-family: "DejaVu Sans", sans-serif; fill: #111; }
.small { font-size: 19px; }
.big { font-size: 22px; }
.thumb { background: #cdcdcd; }
.dim { opacity: .4; }
.flip { transform: rotate(180deg); }
.left { transform: rotate(90deg); }
.right { transform: rotate(-90deg); }
.scroll-y { display: flex; flex-direction: column; }
.scroll-y button { height: 19px; width: 19px; }
.scroll-y .track { flex: 1; display: grid; grid-template-rows: 183fr 630fr 187fr; }
.scroll-y .thumb { grid-row: 2; }
.scroll-x { grid-column: 1 / 3; display: grid; grid-template-columns: 22px 1fr 20px; padding-left: 17px; }

.panels { flex: none; width: 61px; display: flex; gap: 4px; padding: 2px 2px 0 3px; }
.panels > div { width: 26px; }
.panels button { width: 26px; height: 26px; }
.panels svg { width: 16px; height: 16px; }
.panels hr { width: 16px; height: 1px; margin: 5px auto 6px; border: 0; background: #aaa; }

.palette { flex: none; height: 20px; display: flex; justify-content: space-between; padding-left: 2px; border-top: 2px solid #000; background: linear-gradient(#f0f0f0 14px, #fff 14px); }
.swatches { display: flex; flex: 1; min-width: 0; overflow: hidden; height: 14px; }
.swatches button { flex: none; width: 14px; height: 14px; }
.swatches .none { background: #fff; }
.palette .menu { width: 11px; height: 10px; }
.palette-scroll { flex: none; height: 15px; display: grid; grid-template-columns: 20px 1fr 40px; }
.palette-scroll .track { display: grid; grid-template-columns: 317fr 683fr; }

.status { flex: none; height: 34px; display: flex; align-items: center; padding-left: 2px; }
dl { margin: 0; display: grid; line-height: 17px; }
dd { margin: 0; }
.paint { grid-template-columns: 94px 30px; font-size: 12px; }
.status label { width: 14px; }
.opacity input { width: 37px; }
.layer { display: flex; align-items: center; height: 34px; margin-left: 3px; border-left: 1px solid #aaa; }
.layer button { width: 20px; height: 20px; }
.layer .combo { width: 112px; height: 33px; font-weight: 700; font-size: 13px; }
.hint { flex: 1; margin: 0 0 0 2px; white-space: nowrap; overflow: hidden; }
.coords { height: 34px; grid-template-columns: 13px 66px; border-left: 1px solid #aaa; padding-left: 3px; }
.coords dd { font: 13px/17px "DejaVu Sans Mono", monospace; width: 56px; text-align: right; }
.status .coords + label { width: 12px; }
.zoom input { width: 46px; font-size: 13px; text-align: right; padding-right: 8px; }

.taskbar { flex: none; height: 48px; display: flex; color: #fff; background: linear-gradient(100deg, #4585c4, #5796cc 25%, #4c8dcc 60%, #4a86c4); border-top: 1px solid #3a73ad; font-family: "Open Sans", sans-serif; }
.start { width: 60px; margin-right: 2px; padding-bottom: 5px; }
.tasks { display: flex; gap: 2px; flex: 1; min-width: 0; }
.tasks button { display: flex; align-items: center; justify-content: flex-start; gap: 6px; width: 186px; padding-left: 10px; border: 1px solid #346ca3; box-shadow: inset 0 0 0 1px #9dc0e2; background: linear-gradient(100deg, #6aa3d4, #73a0cc); white-space: nowrap; }
.tasks .active { background: linear-gradient(100deg, #86aed2, #a0bcd8 60%, #8cb0d4); box-shadow: inset 0 0 0 1px #dfeaf5; }
.tray { display: flex; gap: 10px; align-items: center; padding-right: 7px; }
.tray svg { width: 20px; height: 20px; }
.clock { display: grid; width: 106px; text-align: center; line-height: 22px; padding: 3px 0 0; align-content: start; }
.moon { width: 28px; }
.desktop { width: 14px; margin-left: 6px; border: 1px solid #346ca3; box-shadow: inset 0 0 0 1px #7fb0de; }
```
FILE: app.js
```js
const NS = 'http://www.w3.org/2000/svg';
const STEP = 13.225;

function add(parent, name, attrs, text) {
  const el = document.createElementNS(NS, name);
  for (const key in attrs) el.setAttribute(key, attrs[key]);
  if (text !== undefined) el.textContent = text;
  parent.append(el);
}

/* Horizontal ruler: one tick per 10 mm, a label per 100 mm */
function drawX(svg, zero) {
  const w = svg.clientWidth;
  svg.replaceChildren();
  let d = `M3 15.5H${w - 2}`;
  for (let i = Math.ceil((4 - zero) / STEP); zero + i * STEP < w - 2; i++) {
    const x = Math.floor(zero + i * STEP) + 0.5;
    const len = i % 10 === 0 ? 13 : i % 2 === 0 ? 6 : 4;
    d += `M${x} 16v-${len}`;
    if (i % 10 === 0) add(svg, 'text', { x: x + 1, y: 12 }, i * 10);
  }
  add(svg, 'path', { d, stroke: '#000' });
  add(svg, 'path', { d: 'M354 11h8l-4 4z' });
}

/* Vertical ruler: digits of each label are stacked */
function drawY(svg, zero) {
  const h = svg.clientHeight;
  svg.replaceChildren();
  let d = `M16.5 3V${h - 1}`;
  for (let i = Math.ceil((3 - zero) / STEP); zero + i * STEP < h; i++) {
    const y = Math.floor(zero + i * STEP) + 0.5;
    const len = i % 10 === 0 ? 13 : i % 2 === 0 ? 6 : 4;
    d += `M17 ${y}h-${len}`;
    if (i % 10 === 0) [...String(-i * 10)].forEach((c, n) => add(svg, 'text', { x: 4, y: y + 8 + n * 9 }, c));
  }
  add(svg, 'path', { d, stroke: '#000' });
  add(svg, 'path', { d: 'M12 304v8l4-4z' });
}

function drawRulers() {
  drawX(document.getElementById('rulerX'), 751);
  drawY(document.getElementById('rulerY'), 612);
}
drawRulers();
addEventListener('resize', drawRulers);

const COLORS = `000000 1a1a1a 333333 4d4d4d 666666 808080 999999 b3b3b3 cccccc e6e6e6 ececec f2f2f2 f9f9f9 ffffff
800000 ff0000 808000 ffff00 008000 00ff00 008080 00ffff 000080 0000ff 800080 ff00ff
2b0000 550000 800000 aa0000 d40000 ff0000 ff2a2a ff5555 ff8080 ffaaaa ffd5d5
280b0b 501616 782121 a02c2c c83737 d35f5f de8787 e9afaf f4d7d7 241c1c 483737 6c5353 916f6f ac9393 c8b7b7 e3dbdb
2b1100 552200 803300 aa4400 d45500 ff6600 ff7f2a ff9955 ffb380 ffccaa ffe6d5
28170b 502d16 784421 a05a2c c87137 d38d5f deaa87 e9c6af f4e3d7 241f1c 483e37 6c5d53 917c6f ac9d93 c8beb7 e3dedb
2b2200 554400 806600 aa8800 d4aa00 ffcc00 ffd42a ffdd55 ffe680 ffeeaa fff6d5
28220b 504416 786721 a0892c c8ab37 d3bc5f decd87 e9ddaf f4eed7 24221c 484537 6c6753 918a6f aca793 c8c4b7 e3e2db
222b00 445500 668000 88aa00 aad400 ccff00 d4ff2a ddff55 e5ff80 eeffaa f6ffd5
22280b 445016 677821 89a02c abc837 bcd35f cdde87 dde9af eef4d7 22241c 454837 676c53 8a916f a7ac93 c4c8b7 e2e3db
112b00 225500`.split(/\s+/);
const swatches = document.getElementById('swatches');
for (const c of COLORS) {
  const b = document.createElement('button');
  b.style.background = '#' + c;
  b.setAttribute('aria-label', '#' + c);
  swatches.append(b);
}
```
